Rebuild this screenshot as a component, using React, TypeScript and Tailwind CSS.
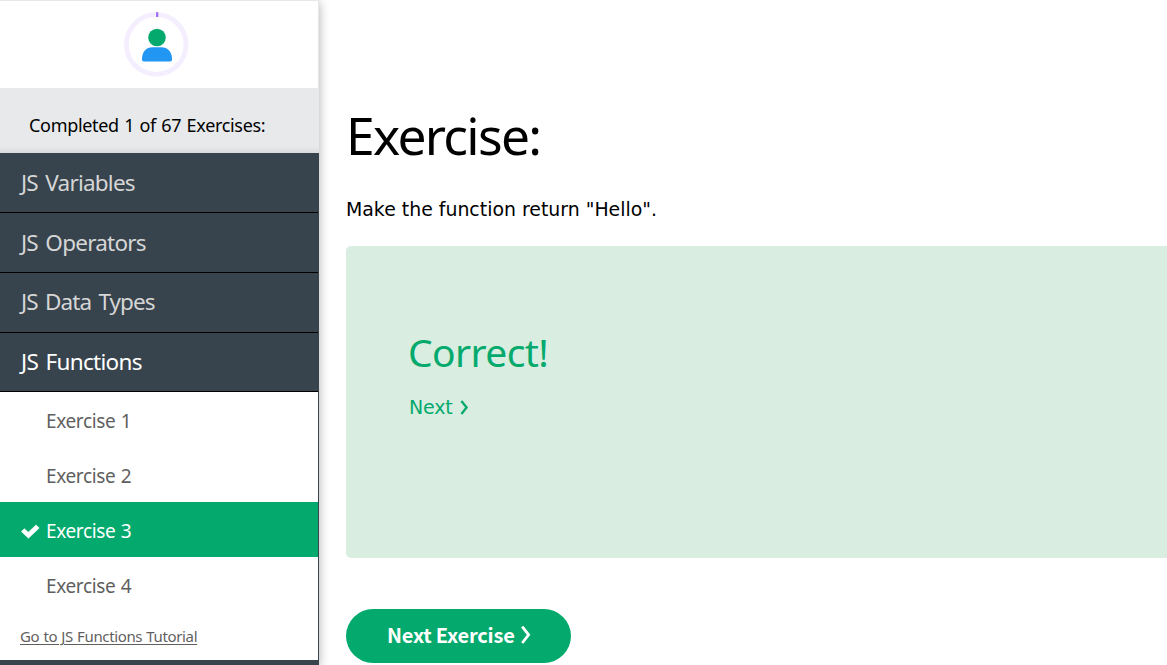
const topics = [
  { label: "JS Variables", cls: "h-[60px] text-[#d6d6d6] tracking-[-0.78px]" },
  { label: "JS Operators", cls: "h-[60px] text-[#d6d6d6] tracking-[-0.77px]" },
  { label: "JS Data Types", cls: "h-[60px] pb-px text-[#d6d6d6] tracking-[-0.9px]" },
  { label: "JS Functions", cls: "h-[59px] text-white tracking-[-0.7px]" },
];

const exercises = [
  { label: "Exercise 1", done: false },
  { label: "Exercise 2", done: false },
  { label: "Exercise 3", done: true },
  { label: "Exercise 4", done: false },
];

function Avatar() {
  return (
    <svg width="66" height="66" viewBox="0 0 66 66" fill="none">
      <circle cx="33.2" cy="33.5" r="29.8" stroke="#f4eeff" strokeWidth="4.8" />
      <path d="M34.2 1.2v4.8" stroke="#9b6cf5" strokeWidth="2.2" />
      <circle cx="34" cy="26.5" r="8.8" fill="#04aa6d" />
      <path d="M19 48.3C19 40.5 23.2 36.2 29.5 36.2h8.8c6.3 0 10.7 4.3 10.7 12.1 0 1.5-.7 2.2-1.9 2.2H20.9c-1.2 0-1.9-.7-1.9-2.2Z" fill="#2196f3" />
    </svg>
  );
}

function Check() {
  return (
    <svg width="19" height="15" viewBox="0 0 19 15">
      <path d="M.4 7.6 3.3 4.7 7.3 8.2 15.1.9 18.2 4.1 7.4 14.2Z" fill="#fff" stroke="#fff" strokeWidth=".6" strokeLinejoin="round" />
    </svg>
  );
}

export default function App() {
  return (
    <div className="flex h-[665px] w-[1167px] overflow-hidden bg-white font-['Noto_Sans',sans-serif]">
      <aside className="relative z-10 flex w-[319px] shrink-0 flex-col bg-[#38444d] shadow-[0_2px_10px_rgba(0,0,0,0.32)]">
        <div className="flex h-[88px] justify-center border-t border-r border-[#e7e8ea] bg-white pt-[10px] pr-[6px]">
          <Avatar />
        </div>
        <div className="h-[65px] bg-linear-to-b from-[#e7e9eb] from-90% to-[#d9dbdd] pt-[25px] pl-[29px] text-[18px] leading-[24px] tracking-[-0.32px] [word-spacing:1px] whitespace-nowrap text-black">
          <span>Completed 1 of 67 Exercises:</span>
        </div>
        <nav className="pr-px">
          {topics.map((t) => (
            <div key={t.label} className={`flex items-center border-b border-black pl-[21px] text-[22.5px] leading-[30px] [word-spacing:2.3px] whitespace-nowrap ${t.cls}`}>
              <span>{t.label}</span>
            </div>
          ))}
          <div className="h-[268px] bg-white">
            {exercises.map((e) => (
              <div key={e.label} className={`flex h-[55px] items-center pt-[3px] text-[19px] leading-[26px] tracking-[-0.38px] [word-spacing:1px] ${e.done ? "bg-[#04aa6d] text-white" : "text-[#5f5f5f]"}`}>
                <div className="w-[46px] shrink-0 pl-[21px]">{e.done && <Check />}</div>
                <span>{e.label}</span>
              </div>
            ))}
            <a className="block pt-[14px] pl-[20px] text-[15px] leading-[20px] tracking-[-0.36px] [word-spacing:0.6px] whitespace-nowrap text-[#5f5f5f] underline underline-offset-2">
              <span>Go to JS Functions Tutorial</span>
            </a>
          </div>
        </nav>
      </aside>
      <main className="w-[848px] shrink-0 pl-[27px]">
        <h1 className="pt-[100px] text-[51.5px] leading-[70px] tracking-[-1.7px] text-black">
          <span>Exercise:</span>
        </h1>
        <p className="pt-[27px] font-['DejaVu_Sans',sans-serif] text-[18.9px] leading-[24px] text-black">
          <span>Make the function return "Hello".</span>
        </p>
        <section className="mt-[25px] h-[312px] rounded-l-[5px] bg-[#d9ede1] pt-[80px] pl-[63px] text-[#04aa6d]">
          <h2 className="-ml-px text-[39px] leading-[52px] tracking-[-0.6px]"><span>Correct!</span></h2>
          <a className="flex items-center pt-[17px] text-[19px] leading-[24px]">
            <span className="font-['DejaVu_Sans',sans-serif] tracking-[-0.2px]">Next</span>
            <svg className="ml-[8px]" width="10" height="15" viewBox="0 0 10 15"><path d="M1.4 1 6.6 7.5 1.4 14" fill="none" stroke="currentColor" strokeWidth="2.3" /></svg>
          </a>
        </section>
        <button className="mt-[51px] flex h-[54px] w-[225px] items-center rounded-full bg-[#04aa6d] pb-[2px] pl-[41px] text-[20px] leading-[28px] whitespace-nowrap text-white">
          <span className="tracking-[-0.2px] [font-family:'Noto_Sans_CJK_SC',sans-serif] [font-weight:700]">Next Exercise</span>
          <svg className="ml-[5px]" width="12" height="18" viewBox="0 0 12 18"><path d="M2.2 .6 8.6 8.8 2.2 17" fill="none" stroke="currentColor" strokeWidth="2.8" /></svg>
        </button>
      </main>
    </div>
  );
}
